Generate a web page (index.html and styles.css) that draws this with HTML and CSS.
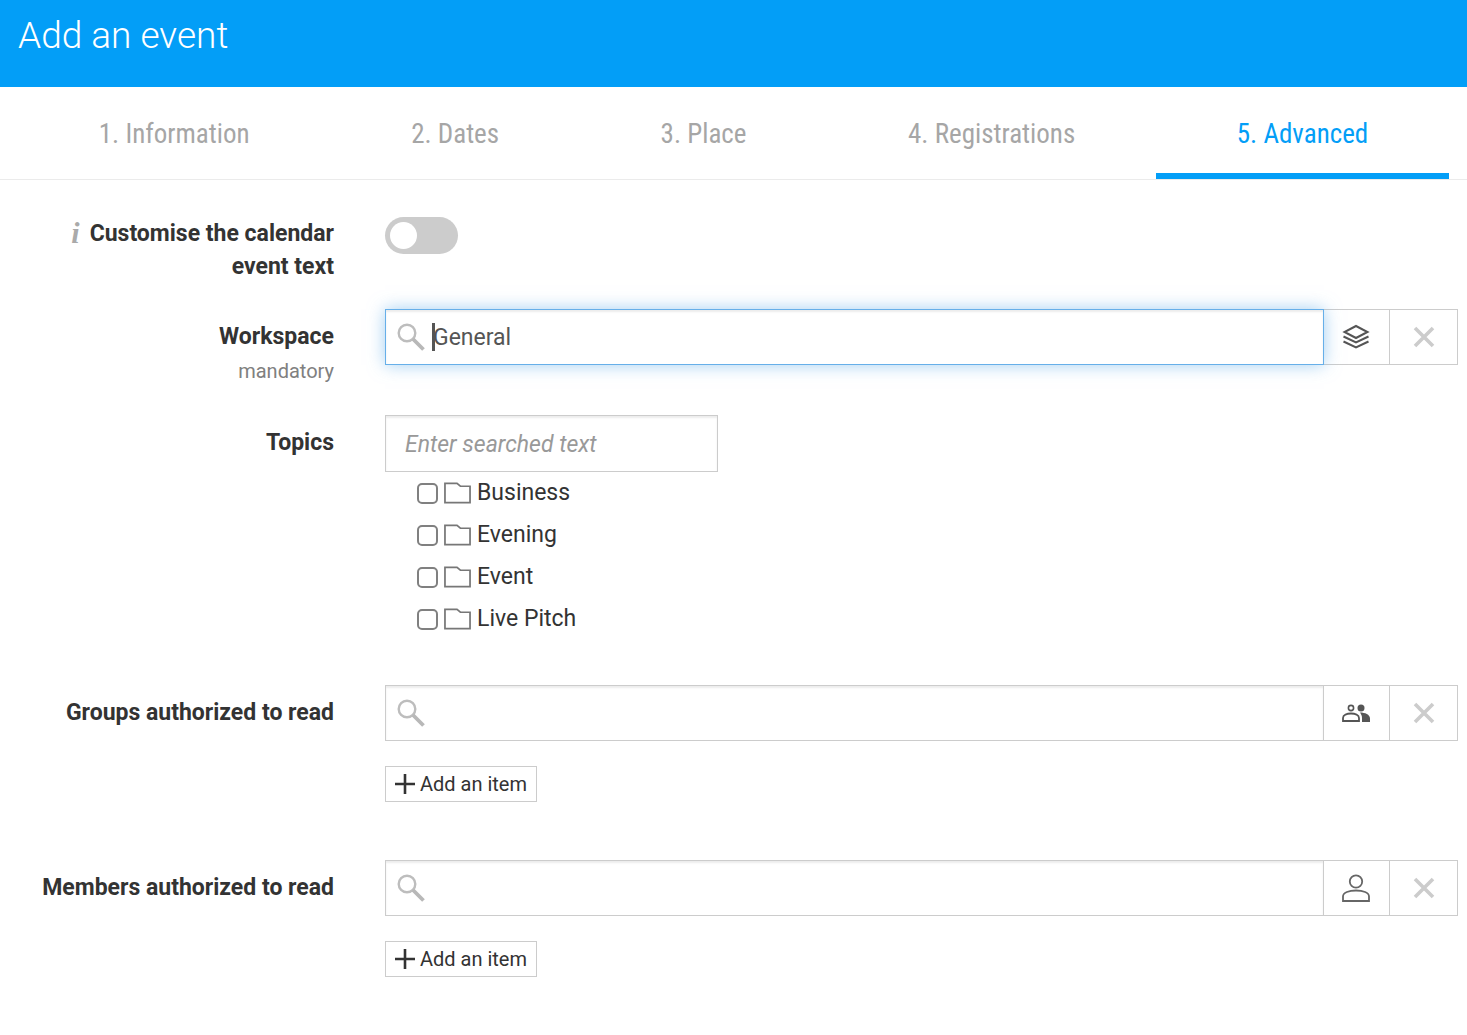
FILE: index.html
```html
<!DOCTYPE html>
<html lang="en">
<head>
<meta charset="utf-8">
<title>Add an event</title>
<link rel="stylesheet" href="styles.css">
</head>
<body>
<svg class="sprite" aria-hidden="true">
  <symbol id="search" viewBox="0 0 28 28"><circle cx="10" cy="10" r="8.300" fill="none" stroke="#bdbdbd" stroke-width="2.400"/><path d="M16 16l10.500 10.500" stroke="#b8b8b8" stroke-width="3.800"/></symbol>
  <symbol id="cross" viewBox="0 0 22 22"><path d="M2 2l18 18M20 2L2 20" stroke="#ccc" stroke-width="3.600"/></symbol>
  <symbol id="folder" viewBox="0 0 28 22"><path d="M1 1h12.500l3.500 3h10v17H1z" fill="none" stroke="#777" stroke-width="1.800"/></symbol>
  <symbol id="plus" viewBox="0 0 20 20"><path d="M10 0v20M0 10h20" stroke="#333" stroke-width="2.600"/></symbol>
</svg>
<header class="header"><h1 class="title">Add an event</h1></header>
<nav class="tabs">
  <a class="tab" href="#information">1. Information</a>
  <a class="tab" href="#dates">2. Dates</a>
  <a class="tab" href="#place">3. Place</a>
  <a class="tab" href="#registrations">4. Registrations</a>
  <a class="tab tab-active" href="#advanced">5. Advanced</a>
</nav>
<form class="form">
  <div class="row">
    <label class="label label-top" for="customise"><span class="info">i</span>Customise the calendar event text</label>
    <div class="field"><input class="toggle" type="checkbox" role="switch" id="customise"></div>
  </div>
  <div class="row">
    <div class="label"><label for="workspace">Workspace</label><span class="hint">mandatory</span></div>
    <div class="field">
      <div class="group">
        <div class="search search-focus">
          <svg class="search-icon"><use href="#search"/></svg>
          <span class="caret"></span>
          <input class="input input-search input-focus" type="text" id="workspace" value="General">
        </div>
        <button class="addon" type="button" aria-label="Choose a workspace"><svg width="28" height="26" viewBox="0 0 28 26" fill="none" stroke="#555" stroke-width="2"><path d="M14 2l11.500 6L14 14 2.500 8z"/><path d="M1.500 12.500L14 18.500l12.500-6M1.500 17.500L14 23.500l12.500-6"/></svg></button>
        <button class="addon addon-clear" type="button" aria-label="Clear workspace"><svg width="22" height="22"><use href="#cross"/></svg></button>
      </div>
    </div>
  </div>
  <div class="row">
    <label class="label" for="topics">Topics</label>
    <div class="field">
      <input class="input input-topics" type="text" id="topics" placeholder="Enter searched text">
      <ul class="topics">
        <li><label class="topic"><input class="check" type="checkbox"><svg class="folder"><use href="#folder"/></svg>Business</label></li>
        <li><label class="topic"><input class="check" type="checkbox"><svg class="folder"><use href="#folder"/></svg>Evening</label></li>
        <li><label class="topic"><input class="check" type="checkbox"><svg class="folder"><use href="#folder"/></svg>Event</label></li>
        <li><label class="topic"><input class="check" type="checkbox"><svg class="folder"><use href="#folder"/></svg>Live Pitch</label></li>
      </ul>
    </div>
  </div>
  <div class="row">
    <label class="label" for="groups">Groups authorized to read</label>
    <div class="field">
      <div class="group">
        <div class="search">
          <svg class="search-icon"><use href="#search"/></svg>
          <input class="input input-search" type="text" id="groups">
        </div>
        <button class="addon" type="button" aria-label="Choose groups"><svg width="28" height="18" viewBox="0 0 28 18"><circle cx="9" cy="4" r="2.600" fill="none" stroke="#555" stroke-width="1.600"/><path d="M1 17v-3c0-3 4-4.500 8-4.500s8 1.500 8 4.500v3z" fill="none" stroke="#555" stroke-width="1.800"/><circle cx="19" cy="4" r="3.500" fill="#555"/><path d="M18 8.500c5 0 10 2 10 6V18h-8v-4c0-2.500-1-4-2-5.500z" fill="#555"/></svg></button>
        <button class="addon addon-clear" type="button" aria-label="Clear groups"><svg width="22" height="22"><use href="#cross"/></svg></button>
      </div>
      <button class="add" type="button"><svg width="20" height="20"><use href="#plus"/></svg>Add an item</button>
    </div>
  </div>
  <div class="row">
    <label class="label" for="members">Members authorized to read</label>
    <div class="field">
      <div class="group">
        <div class="search">
          <svg class="search-icon"><use href="#search"/></svg>
          <input class="input input-search" type="text" id="members">
        </div>
        <button class="addon" type="button" aria-label="Choose members"><svg width="28" height="28" viewBox="0 0 28 28" fill="none" stroke="#666" stroke-width="1.800"><circle cx="14" cy="7.500" r="6.200"/><path d="M1 27v-4.500c0-4 6-6 13-6s13 2 13 6V27z"/></svg></button>
        <button class="addon addon-clear" type="button" aria-label="Clear members"><svg width="22" height="22"><use href="#cross"/></svg></button>
      </div>
      <button class="add" type="button"><svg width="20" height="20"><use href="#plus"/></svg>Add an item</button>
    </div>
  </div>
</form>
</body>
</html>
```
FILE: styles.css
```css
* {
  box-sizing: border-box;
}

body {
  margin: 0;
  background: #fff;
  color: #333;
  font: 23px/33px Roboto, "Liberation Sans", sans-serif;
}

.sprite {
  display: none;
}

.header {
  height: 87px;
  padding: 12px 18px;
  background: #039ef7;
}

.title {
  margin: 0;
  color: #fff;
  font-size: 37px;
  font-weight: 300;
  line-height: 48px;
}

.tabs {
  display: flex;
  padding: 0 18px;
  border-bottom: 1px solid #ebebeb;
}

.tab {
  flex: 1 1 auto;
  padding: 8px 0 0;
  border-bottom: 6px solid transparent;
  color: #a6a6a6;
  font-family: "Roboto Condensed", "Liberation Sans Narrow", Roboto, sans-serif;
  font-size: 27px;
  line-height: 78px;
  text-align: center;
  text-decoration: none;
}

.tab-active {
  border-bottom-color: #039ef7;
  color: #039ef7;
}

.form {
  display: flex;
  flex-direction: column;
  gap: 26px;
  padding: 37px 9px 0 0;
}

.row {
  display: grid;
  grid-template-columns: 300px minmax(0, 1fr);
  gap: 51px;
  padding-left: 34px;
}

.label {
  padding: 11px 0 1px;
  font-weight: 700;
  text-align: right;
}

.label-top {
  padding: 0;
}

.hint {
  display: block;
  margin-top: 2px;
  color: #808080;
  font-size: 20px;
  font-weight: 400;
}

.info {
  margin-right: 10px;
  color: #aaa;
  font-family: "Liberation Serif", serif;
  font-size: 30px;
  font-style: italic;
  line-height: 20px;
  vertical-align: -2px;
}

.toggle {
  display: block;
  appearance: none;
  width: 73px;
  height: 37px;
  margin: 0;
  padding: 5px;
  border-radius: 19px;
  background: #ccc;
}

.toggle::before {
  content: "";
  display: block;
  width: 27px;
  height: 27px;
  border-radius: 50%;
  background: #fff;
}

.toggle:checked {
  padding-left: 41px;
  background: #039ef7;
}

.group {
  display: flex;
}

.search {
  position: relative;
  flex: 1;
}

.search-focus {
  z-index: 1;
}

.search-icon {
  position: absolute;
  top: 14px;
  left: 12px;
  width: 28px;
  height: 28px;
}

.caret {
  position: absolute;
  top: 14px;
  left: 47px;
  width: 3px;
  height: 28px;
  background: #555;
}

.input {
  display: block;
  width: 100%;
  height: 56px;
  border: 1px solid #ccc;
  border-radius: 0;
  outline: 0;
  background: #fff;
  box-shadow: inset 0 2px 2px rgba(0, 0, 0, 0.075);
  color: #555;
  font: inherit;
}

.input-search {
  padding: 0 12px 0 47px;
}

.input-focus {
  border-color: #66afe9;
  box-shadow: inset 0 2px 2px rgba(0, 0, 0, 0.075), 0 0 16px rgba(102, 175, 233, 0.6);
}

.input-topics {
  width: 333px;
  height: 57px;
  padding: 1px 19px 0;
}

.input-topics::placeholder {
  color: #999;
  font-style: italic;
}

.addon {
  display: flex;
  align-items: center;
  justify-content: center;
  width: 68px;
  height: 56px;
  margin-left: -2px;
  padding: 0;
  border: 1px solid #ccc;
  background: none;
}

.addon-clear {
  width: 69px;
  margin-left: -1px;
}

.topics {
  margin: 0;
  padding: 0 0 19px 32px;
  list-style: none;
}

.topic {
  display: flex;
  align-items: center;
  gap: 6px;
  width: fit-content;
  line-height: 42px;
}

.check {
  appearance: none;
  width: 21px;
  height: 21px;
  margin: 0;
  border: 2px solid #808080;
  border-radius: 5px;
}

.check:checked {
  background: #039ef7;
}

.folder {
  width: 27px;
  height: 22px;
}

.add {
  display: flex;
  align-items: center;
  gap: 5px;
  height: 36px;
  margin: 25px 0 32px;
  padding: 0 9px;
  border: 1px solid #ccc;
  background: #fff;
  color: #333;
  font: inherit;
  font-size: 20px;
}
```
